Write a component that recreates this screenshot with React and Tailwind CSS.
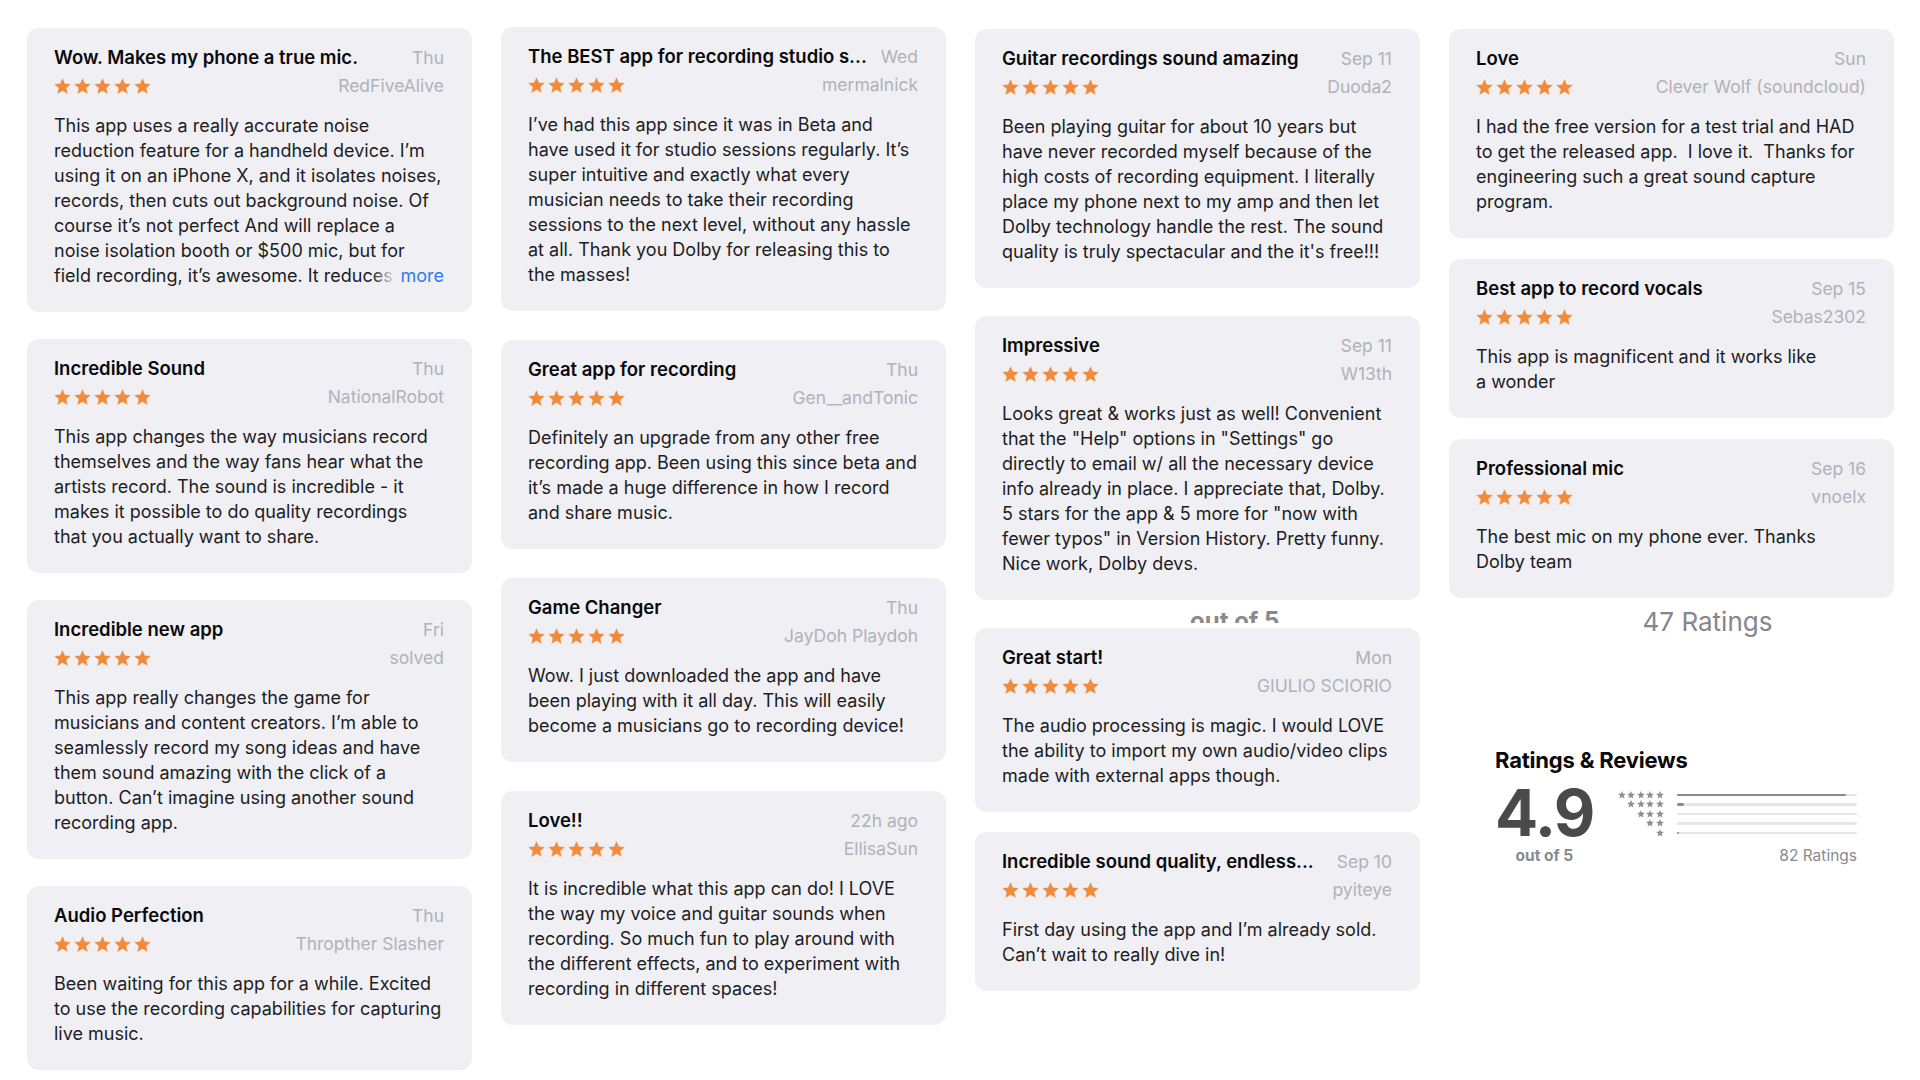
const font = { fontFamily: 'Inter, "Liberation Sans", sans-serif' };

const columns = [
  {
    top: 'pt-[28px]',
    gap: 'gap-[27px]',
    cards: [
      {
        title: 'Wow. Makes my phone a true mic.',
        date: 'Thu',
        author: 'RedFiveAlive',
        lines: [
          'This app uses a really accurate noise',
          'reduction feature for a handheld device. I’m',
          'using it on an iPhone X, and it isolates noises,',
          'records, then cuts out background noise. Of',
          'course it’s not perfect And will replace a',
          'noise isolation booth or $500 mic, but for',
        ],
        more: 'field recording, it’s awesome. It reduces',
      },
      {
        title: 'Incredible Sound',
        date: 'Thu',
        author: 'NationalRobot',
        lines: [
          'This app changes the way musicians record',
          'themselves and the way fans hear what the',
          'artists record. The sound is incredible - it',
          'makes it possible to do quality recordings',
          'that you actually want to share.',
        ],
      },
      {
        title: 'Incredible new app',
        date: 'Fri',
        author: 'solved',
        lines: [
          'This app really changes the game for',
          'musicians and content creators. I’m able to',
          'seamlessly record my song ideas and have',
          'them sound amazing with the click of a',
          'button. Can’t imagine using another sound',
          'recording app.',
        ],
      },
      {
        title: 'Audio Perfection',
        date: 'Thu',
        author: 'Thropther Slasher',
        lines: [
          'Been waiting for this app for a while. Excited',
          'to use the recording capabilities for capturing',
          'live music.',
        ],
      },
    ],
  },
  {
    top: 'pt-[27px]',
    gap: 'gap-[29px]',
    cards: [
      {
        title: 'The BEST app for recording studio s...',
        date: 'Wed',
        author: 'mermalnick',
        lines: [
          'I’ve had this app since it was in Beta and',
          'have used it for studio sessions regularly. It’s',
          'super intuitive and exactly what every',
          'musician needs to take their recording',
          'sessions to the next level, without any hassle',
          'at all. Thank you Dolby for releasing this to',
          'the masses!',
        ],
      },
      {
        title: 'Great app for recording',
        date: 'Thu',
        author: 'Gen__andTonic',
        lines: [
          'Definitely an upgrade from any other free',
          'recording app. Been using this since beta and',
          'it’s made a huge difference in how I record',
          'and share music.',
        ],
      },
      {
        title: 'Game Changer',
        date: 'Thu',
        author: 'JayDoh Playdoh',
        lines: [
          'Wow. I just downloaded the app and have',
          'been playing with it all day. This will easily',
          'become a musicians go to recording device!',
        ],
      },
      {
        title: 'Love!!',
        date: '22h ago',
        author: 'EllisaSun',
        lines: [
          'It is incredible what this app can do! I LOVE',
          'the way my voice and guitar sounds when',
          'recording. So much fun to play around with',
          'the different effects, and to experiment with',
          'recording in different spaces!',
        ],
      },
    ],
  },
];

const col3 = [
  {
    title: 'Guitar recordings sound amazing',
    date: 'Sep 11',
    author: 'Duoda2',
    lines: [
      'Been playing guitar for about 10 years but',
      'have never recorded myself because of the',
      'high costs of recording equipment. I literally',
      'place my phone next to my amp and then let',
      'Dolby technology handle the rest. The sound',
      'quality is truly spectacular and the it\'s free!!!',
    ],
  },
  {
    title: 'Impressive',
    date: 'Sep 11',
    author: 'W13th',
    lines: [
      'Looks great & works just as well! Convenient',
      'that the "Help" options in "Settings" go',
      'directly to email w/ all the necessary device',
      'info already in place. I appreciate that, Dolby.',
      '5 stars for the app & 5 more for "now with',
      'fewer typos" in Version History. Pretty funny.',
      'Nice work, Dolby devs.',
    ],
  },
  {
    title: 'Great start!',
    date: 'Mon',
    author: 'GIULIO SCIORIO',
    lines: [
      'The audio processing is magic. I would LOVE',
      'the ability to import my own audio/video clips',
      'made with external apps though.',
    ],
  },
  {
    title: 'Incredible sound quality, endless...',
    date: 'Sep 10',
    author: 'pyiteye',
    lines: [
      'First day using the app and I’m already sold.',
      'Can’t wait to really dive in!',
    ],
  },
];

const col4 = [
  {
    title: 'Love',
    date: 'Sun',
    author: 'Clever Wolf (soundcloud)',
    lines: [
      'I had the free version for a test trial and HAD',
      'to get the released app.  I love it.  Thanks for',
      'engineering such a great sound capture',
      'program.',
    ],
  },
  {
    title: 'Best app to record vocals',
    date: 'Sep 15',
    author: 'Sebas2302',
    lines: ['This app is magnificent and it works like', 'a wonder'],
  },
  {
    title: 'Professional mic',
    date: 'Sep 16',
    author: 'vnoelx',
    lines: ['The best mic on my phone ever. Thanks', 'Dolby team'],
  },
];

function Star({ size = 17, color = '#f18a3a' }) {
  return (
    <svg width={size} height={size} viewBox="0 0 24 24">
      <polygon
        points="12,1 15.06,8.29 22.94,8.95 16.95,14.11 18.76,21.8 12,17.7 5.24,21.8 7.05,14.11 1.06,8.95 8.94,8.29"
        fill={color}
        stroke={color}
        strokeWidth="0.6"
        strokeLinejoin="round"
      />
    </svg>
  );
}

function Stars() {
  return (
    <div className="flex gap-[3px]">
      {[0, 1, 2, 3, 4].map((i) => (
        <Star key={i} />
      ))}
    </div>
  );
}

function ReviewCard({ review }) {
  return (
    <div className="w-[445px] rounded-[12px] bg-[#efeff4] pt-[16px] pb-[24px] pl-[27px] pr-[28px]">
      <div className="flex h-[28px] items-center justify-between">
        <span className="text-[18.5px] font-semibold text-[#0a0a0a] whitespace-nowrap">{review.title}</span>
        <span className="text-[17.5px] text-[#b2b2b7] whitespace-nowrap">{review.date}</span>
      </div>
      <div className="flex h-[28px] items-center justify-between">
        <Stars />
        <span className="text-[17.5px] text-[#b2b2b7] whitespace-nowrap">{review.author}</span>
      </div>
      <div className="mt-[13px] text-[18px] leading-[25px] text-[#1d1d1f]">
        {review.lines.map((l, i) => (
          <div key={i} className="whitespace-pre">{l}</div>
        ))}
        {review.more && (
          <div className="flex whitespace-nowrap">
            <div className="relative flex-1 overflow-hidden">
              {review.more}
              <div className="absolute right-0 top-0 h-full w-[24px] bg-gradient-to-r from-[#efeff400] to-[#efeff4]" />
            </div>
            <span className="pl-[4px] text-[#2f7bf5]">more</span>
          </div>
        )}
      </div>
    </div>
  );
}

const bars = [
  { stars: 5, fill: '94%' },
  { stars: 4, fill: '4%' },
  { stars: 3, fill: '0%' },
  { stars: 2, fill: '0%' },
  { stars: 1, fill: '1.2%' },
];

function RatingsSummary() {
  return (
    <div className="ml-[46px] mt-[108px] w-[362px]">
      <div className="text-[22px] font-bold leading-[28px] tracking-[-0.2px] text-[#0a0a0a]">Ratings &amp; Reviews</div>
      <div className="mt-[11px] flex">
        <div className="flex flex-col items-center">
          <div className="text-[64px] font-bold leading-[56px] tracking-[-1.5px] text-[#4a4a4c]">4.9</div>
          <div className="mt-[5px] text-[15.5px] font-bold leading-[20px] text-[#8a8a8e]">out of 5</div>
        </div>
        <div className="ml-[24px] mt-[5px] flex flex-1 flex-col">
          {bars.map((b) => (
            <div key={b.stars} className="flex h-[9.5px] items-center">
              <div className="flex w-[46px] justify-end gap-[1.6px]">
                {Array.from({ length: b.stars }).map((_, i) => (
                  <Star key={i} size={8} color="#8e8e93" />
                ))}
              </div>
              <div className="ml-[13px] h-[2.5px] flex-1 rounded-full bg-[#e6e6ea]">
                <div className="h-full rounded-full bg-[#8a8a8e]" style={{ width: b.fill }} />
              </div>
            </div>
          ))}
          <div className="mt-auto text-right text-[15.5px] leading-[20px] text-[#8a8a8e]">82 Ratings</div>
        </div>
      </div>
    </div>
  );
}

export default function App() {
  return (
    <div className="flex min-h-[1080px] gap-[29px] bg-white pl-[27px]" style={font}>
      {columns.map((col, ci) => (
        <div key={ci} className={`flex w-[445px] flex-col ${col.top} ${col.gap}`}>
          {col.cards.map((r, i) => (
            <ReviewCard key={i} review={r} />
          ))}
        </div>
      ))}

      <div className="flex w-[445px] flex-col pt-[29px]">
        <ReviewCard review={col3[0]} />
        <div className="mt-[28px]">
          <ReviewCard review={col3[1]} />
        </div>
        <div className="h-[28px]">
          <div className="h-[23px] overflow-hidden pt-[9px] pl-[215px] text-[24px] font-bold leading-[24px] text-[#8a8a8e]">
            out of 5
          </div>
        </div>
        <ReviewCard review={col3[2]} />
        <div className="mt-[20px]">
          <ReviewCard review={col3[3]} />
        </div>
      </div>

      <div className="flex w-[445px] flex-col pt-[29px]">
        <div className="flex flex-col gap-[21px]">
          {col4.map((r, i) => (
            <ReviewCard key={i} review={r} />
          ))}
        </div>
        <div className="mt-[8px] pl-[72px] text-center text-[26px] leading-[32px] text-[#86868b]">47 Ratings</div>
        <RatingsSummary />
      </div>
    </div>
  );
}
